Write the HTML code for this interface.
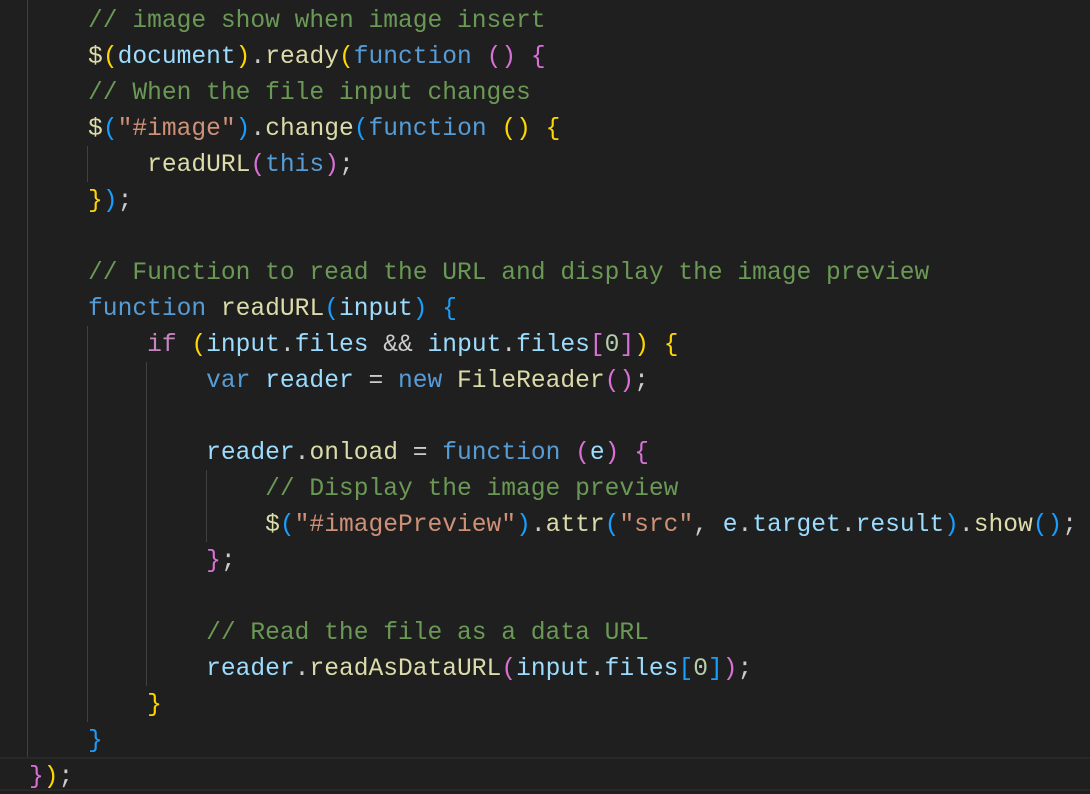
<!DOCTYPE html>
<html><head><meta charset="utf-8"><style>
html,body{margin:0;padding:0;background:#1f1f1f;width:1090px;height:794px;overflow:hidden}
.ed{position:relative;width:1090px;height:794px;font-family:"Liberation Mono",monospace;font-size:24.6px;color:#cccccc}
.t{position:absolute;left:0;top:2px;width:1090px}
.l{position:absolute;left:29px;height:36px;line-height:36px;white-space:pre}
.c{color:#6a9955}.k{color:#569cd6}.v{color:#9cdcfe}.f{color:#dcdcaa}.s{color:#ce9178}.n{color:#b5cea8}.p{color:#c586c0}
.g{color:#ffd700}.m{color:#da70d6}.b{color:#179fff}
.gd{position:absolute;width:1px;background:#404040}
.cur{position:absolute;left:0;top:757px;width:1090px;height:34px;border-top:2px solid #282828;border-bottom:2px solid #282828;box-sizing:border-box}
</style></head><body><div class="ed">
<div class="cur"></div>
<div class="gd" style="left:27px;top:0;height:757px"></div>
<div class="gd" style="left:87px;top:146px;height:36px"></div>
<div class="gd" style="left:87px;top:326px;height:396px"></div>
<div class="gd" style="left:146px;top:362px;height:324px"></div>
<div class="gd" style="left:206px;top:470px;height:72px"></div>
<div class="t">
<div class="l" style="top:2px">    <span class="c">// image show when image insert</span></div>
<div class="l" style="top:38px">    <span class="f">$</span><span class="g">(</span><span class="v">document</span><span class="g">)</span>.<span class="f">ready</span><span class="g">(</span><span class="k">function</span> <span class="m">()</span> <span class="m">{</span></div>
<div class="l" style="top:74px">    <span class="c">// When the file input changes</span></div>
<div class="l" style="top:110px">    <span class="f">$</span><span class="b">(</span><span class="s">"#image"</span><span class="b">)</span>.<span class="f">change</span><span class="b">(</span><span class="k">function</span> <span class="g">()</span> <span class="g">{</span></div>
<div class="l" style="top:146px">        <span class="f">readURL</span><span class="m">(</span><span class="k">this</span><span class="m">)</span>;</div>
<div class="l" style="top:182px">    <span class="g">}</span><span class="b">)</span>;</div>
<div class="l" style="top:254px">    <span class="c">// Function to read the URL and display the image preview</span></div>
<div class="l" style="top:290px">    <span class="k">function</span> <span class="f">readURL</span><span class="b">(</span><span class="v">input</span><span class="b">)</span> <span class="b">{</span></div>
<div class="l" style="top:326px">        <span class="p">if</span> <span class="g">(</span><span class="v">input</span>.<span class="v">files</span> &amp;&amp; <span class="v">input</span>.<span class="v">files</span><span class="m">[</span><span class="n">0</span><span class="m">]</span><span class="g">)</span> <span class="g">{</span></div>
<div class="l" style="top:362px">            <span class="k">var</span> <span class="v">reader</span> = <span class="k">new</span> <span class="f">FileReader</span><span class="m">()</span>;</div>
<div class="l" style="top:434px">            <span class="v">reader</span>.<span class="f">onload</span> = <span class="k">function</span> <span class="m">(</span><span class="v">e</span><span class="m">)</span> <span class="m">{</span></div>
<div class="l" style="top:470px">                <span class="c">// Display the image preview</span></div>
<div class="l" style="top:506px">                <span class="f">$</span><span class="b">(</span><span class="s">"#imagePreview"</span><span class="b">)</span>.<span class="f">attr</span><span class="b">(</span><span class="s">"src"</span>, <span class="v">e</span>.<span class="v">target</span>.<span class="v">result</span><span class="b">)</span>.<span class="f">show</span><span class="b">()</span>;</div>
<div class="l" style="top:542px">            <span class="m">}</span>;</div>
<div class="l" style="top:614px">            <span class="c">// Read the file as a data URL</span></div>
<div class="l" style="top:650px">            <span class="v">reader</span>.<span class="f">readAsDataURL</span><span class="m">(</span><span class="v">input</span>.<span class="v">files</span><span class="b">[</span><span class="n">0</span><span class="b">]</span><span class="m">)</span>;</div>
<div class="l" style="top:686px">        <span class="g">}</span></div>
<div class="l" style="top:722px">    <span class="b">}</span></div>
<div class="l" style="top:758px"><span class="m">}</span><span class="g">)</span>;</div>
</div>
</div></body></html>
